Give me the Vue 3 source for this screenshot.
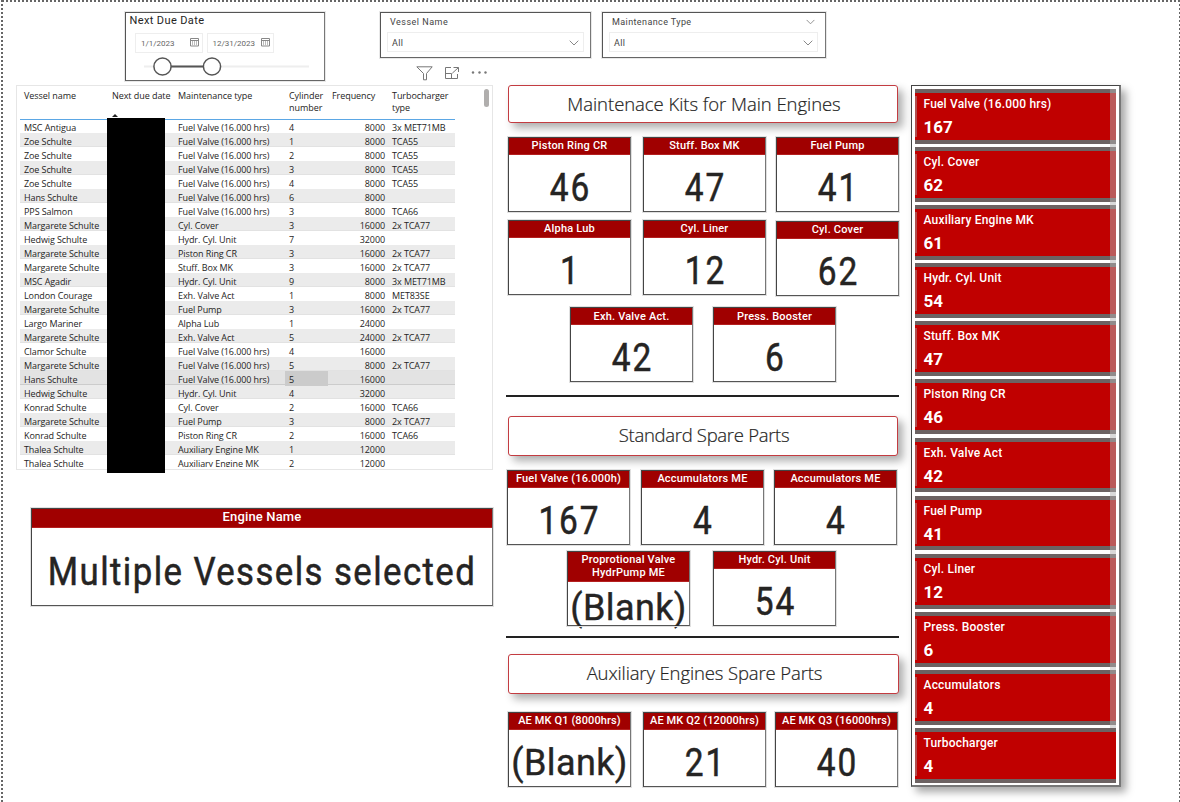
<script setup>
const columns = ['Vessel name', 'Next due date', 'Maintenance type', 'Cylinder number', 'Frequency', 'Turbocharger type']

const FV = 'Fuel Valve (16.000 hrs)'
const rows = [
  ['MSC Antigua', FV, 4, 8000, '3x MET71MB'],
  ['Zoe Schulte', FV, 1, 8000, 'TCA55'],
  ['Zoe Schulte', FV, 2, 8000, 'TCA55'],
  ['Zoe Schulte', FV, 3, 8000, 'TCA55'],
  ['Zoe Schulte', FV, 4, 8000, 'TCA55'],
  ['Hans Schulte', FV, 6, 8000, ''],
  ['PPS Salmon', FV, 3, 8000, 'TCA66'],
  ['Margarete Schulte', 'Cyl. Cover', 3, 16000, '2x TCA77'],
  ['Hedwig Schulte', 'Hydr. Cyl. Unit', 7, 32000, ''],
  ['Margarete Schulte', 'Piston Ring CR', 3, 16000, '2x TCA77'],
  ['Margarete Schulte', 'Stuff. Box MK', 3, 16000, '2x TCA77'],
  ['MSC Agadir', 'Hydr. Cyl. Unit', 9, 8000, '3x MET71MB'],
  ['London Courage', 'Exh. Valve Act', 1, 8000, 'MET83SE'],
  ['Margarete Schulte', 'Fuel Pump', 3, 16000, '2x TCA77'],
  ['Largo Mariner', 'Alpha Lub', 1, 24000, ''],
  ['Margarete Schulte', 'Exh. Valve Act', 5, 24000, '2x TCA77'],
  ['Clamor Schulte', FV, 4, 16000, ''],
  ['Margarete Schulte', FV, 5, 8000, '2x TCA77'],
  ['Hans Schulte', FV, 5, 16000, ''],
  ['Hedwig Schulte', 'Hydr. Cyl. Unit', 4, 32000, ''],
  ['Konrad Schulte', 'Cyl. Cover', 2, 16000, 'TCA66'],
  ['Margarete Schulte', 'Fuel Pump', 3, 8000, '2x TCA77'],
  ['Konrad Schulte', 'Piston Ring CR', 2, 16000, 'TCA66'],
  ['Thalea Schulte', 'Auxiliary Engine MK', 1, 12000, ''],
  ['Thalea Schulte', 'Auxiliary Engine MK', 2, 12000, '']
]
const selectedRow = 18

const sections = [
  {
    id: 'main', title: 'Maintenace Kits for Main Engines',
    groups: [
      { id: 'g1', cards: [['Piston Ring CR', '46'], ['Stuff. Box MK', '47'], ['Fuel Pump', '41']] },
      { id: 'g2', cards: [['Alpha Lub', '1'], ['Cyl. Liner', '12'], ['Cyl. Cover', '62']] },
      { id: 'g3', cards: [['Exh. Valve Act.', '42'], ['Press. Booster', '6']] }
    ]
  },
  {
    id: 'standard', title: 'Standard Spare Parts',
    groups: [
      { id: 'g4', cards: [['Fuel Valve (16.000h)', '167'], ['Accumulators ME', '4'], ['Accumulators ME', '4']] },
      { id: 'g5', cards: [['Proprotional Valve HydrPump ME', '(Blank)'], ['Hydr. Cyl. Unit', '54']] }
    ]
  },
  {
    id: 'aux', title: 'Auxiliary Engines Spare Parts',
    groups: [
      { id: 'g6', cards: [['AE MK Q1 (8000hrs)', '(Blank)'], ['AE MK Q2 (12000hrs)', '21'], ['AE MK Q3 (16000hrs)', '40']] }
    ]
  }
]

const totals = [
  ['Fuel Valve (16.000 hrs)', 167], ['Cyl. Cover', 62], ['Auxiliary Engine MK', 61], ['Hydr. Cyl. Unit', 54],
  ['Stuff. Box MK', 47], ['Piston Ring CR', 46], ['Exh. Valve Act', 42], ['Fuel Pump', 41],
  ['Cyl. Liner', 12], ['Press. Booster', 6], ['Accumulators', 4], ['Turbocharger', 4]
]
</script>

<template>
  <div class="page">
    <header class="filters">
      <section class="slicer date-slicer">
        <h2>Next Due Date</h2>
        <div class="dates">
          <div v-for="d in ['1/1/2023', '12/31/2023']" :key="d" class="date">
            <span>{{ d }}</span>
            <svg width="9" height="9" viewBox="0 0 9 9" fill="none" stroke="#888" stroke-width="1">
              <path d="M.5 .5h8v7.500h-8zM.5 2.500h8" />
              <path d="M2.500 3v4.500M4.500 3v4.500M6.500 3v4.500" stroke="#bbb" />
            </svg>
          </div>
        </div>
        <svg class="range" width="166" height="20" viewBox="0 0 166 20" fill="#fff">
          <path d="M0 9.500h165" stroke="#eee" stroke-width="2" />
          <path d="M20 9.500h50" stroke="#555" stroke-width="2" />
          <circle cx="18.500" cy="9.500" r="8.600" stroke="#555" stroke-width="1.500" />
          <circle cx="68" cy="9.500" r="8.600" stroke="#555" stroke-width="1.500" />
        </svg>
      </section>

      <div class="vessel-filter">
        <section class="slicer drop">
          <h3>Vessel Name</h3>
          <div class="select">
            <span>All</span>
            <svg width="10" height="6" viewBox="0 0 10 6" fill="none" stroke="#888"><path d="M.7.7 5 5 9.300.7" /></svg>
          </div>
        </section>
        <div class="tools">
          <svg width="17" height="15" viewBox="0 0 17 15" fill="none" stroke="#777"><path d="M.8.800h15.400L10.500 7.500v6.300h-3V7.500z" /></svg>
          <svg width="16" height="14" viewBox="0 0 16 14" fill="none" stroke="#777"><path d="M7 1.500H1.500v11h12V8M1.500 7.500h6v5M9.500 1.500h5V6M14.300 1.700 8.300 7.200" /></svg>
          <svg width="17" height="14" viewBox="0 0 17 14" fill="#777"><circle cx="2" cy="6.500" r="1.200" /><circle cx="8.500" cy="6.500" r="1.200" /><circle cx="14.500" cy="6.500" r="1.200" /></svg>
        </div>
      </div>

      <section class="slicer drop type">
        <h3>Maintenance Type <svg width="9" height="6" viewBox="0 0 10 6" fill="none" stroke="#888"><path d="M.7.7 5 5 9.300.7" /></svg></h3>
        <div class="select">
          <span>All</span>
          <svg width="10" height="6" viewBox="0 0 10 6" fill="none" stroke="#888"><path d="M.7.7 5 5 9.300.7" /></svg>
        </div>
      </section>
    </header>

    <main class="board">
      <div class="left">
        <section class="table">
          <div class="row head">
            <div v-for="c in columns" :key="c" class="cell">{{ c }}</div>
          </div>
          <div class="rows">
            <div v-for="(r, i) in rows" :key="i" class="row" :class="{ band: i % 2 === 1 || i === selectedRow, selected: i === selectedRow }">
              <div class="cell">{{ r[0] }}</div>
              <div class="cell"></div>
              <div class="cell">{{ r[1] }}</div>
              <div class="cell num">{{ r[2] }}</div>
              <div class="cell freq">{{ r[3] }}</div>
              <div class="cell turbo">{{ r[4] }}</div>
            </div>
          </div>
          <i class="sort"></i>
          <i class="scroll"></i>
          <i class="redaction"></i>
        </section>
        <section class="card engine">
          <h4>Engine Name</h4>
          <p>Multiple Vessels selected</p>
        </section>
      </div>

      <div class="middle">
        <section v-for="s in sections" :key="s.id" class="section" :class="s.id">
          <h1>{{ s.title }}</h1>
          <div v-for="g in s.groups" :key="g.id" class="group" :class="g.id">
            <article v-for="(c, i) in g.cards" :key="i" class="card">
              <h4>{{ c[0] }}</h4>
              <p :class="c[1] === '(Blank)' ? 'blank' : 'value'">{{ c[1] }}</p>
            </article>
          </div>
        </section>
      </div>

      <aside class="totals">
        <div v-for="t in totals" :key="t[0]" class="total">
          <span>{{ t[0] }}</span>
          <b>{{ t[1] }}</b>
        </div>
      </aside>
    </main>
  </div>
</template>

<style>
body { margin: 0; background: #fff; overflow: hidden; }
</style>

<style scoped>
* { box-sizing: border-box; }
h1, h2, h3, h4, p { margin: 0; font-weight: 400; }
svg { display: block; flex: none; }
.page {
  position: relative; width: 1180px; height: 802px; overflow: hidden; color: #252423;
  font-family: Roboto, "Liberation Sans", sans-serif; white-space: nowrap;
  background:
    repeating-linear-gradient(90deg, #666 0 2px, #fff 2px 4px) 2px 0 / 100% 2px no-repeat,
    repeating-linear-gradient(180deg, #666 0 2px, #fff 2px 4px) 1px 0 / 2px 100% no-repeat,
    repeating-linear-gradient(180deg, #666 0 2px, #fff 2px 4px) 1179px 0 / 1px 100% no-repeat #fff;
}
.filters { display: flex; align-items: flex-start; height: 85px; padding: 12px 0 0 125px; }
.slicer { border: 1px solid #555; border-right-color: #777; border-bottom-color: #666; outline: 1px solid #e8e8e8; }
.date-slicer { width: 200px; height: 69px; margin-right: 55px; }
.date-slicer h2 { font-size: 11px; line-height: 14px; padding: 1px 0 0 3.500px; letter-spacing: .38px; }
.dates { display: flex; gap: 4px; margin: 5px 0 0 9px; }
.date { display: flex; align-items: center; justify-content: space-between; width: 67.500px; height: 20px; border: 1px solid #eee; padding: 0 3px 0 5px; font-size: 8px; color: #666; }
.date svg { margin-bottom: 2px; }
.range { margin: 4px 0 0 18px; }
.vessel-filter { width: 211px; margin-right: 11px; }
.drop { height: 46px; padding: 0 6px; }
.drop h3 { display: flex; justify-content: space-between; align-items: center; height: 17px; padding: 0 3px; font-size: 9px; letter-spacing: .5px; color: #444; }
.type h3 { letter-spacing: .4px; }
.select { display: flex; align-items: center; justify-content: space-between; height: 20px; margin-top: 2px; padding: 1px 4px 0; border: 1px solid #eee; font-size: 9px; letter-spacing: .3px; color: #444; }
.type { width: 224px; padding: 0 7px 0 6px; }
.tools { display: flex; gap: 11px; margin: 8px 0 0 35.500px; }

.board { display: grid; grid-template-columns: 477px 393px 210px; margin-left: 16px; align-items: start; }
.middle { margin-left: 13px; width: 393px; }
.table { position: relative; height: 385px; border: 1px solid #e6e6e6; padding: 0 0 0 3px; font: 9px/12px "Open Sans", "Noto Sans", sans-serif; }
.row { display: grid; grid-template-columns: 88px 66px 111px 43px 60px 67px; width: 435px; height: 14px; }
.cell { padding: 2.500px 4px 0; line-height: 12px; letter-spacing: -.1px; }
.head { height: 33px; }
.head .cell { white-space: normal; padding: 4px 0 0 4px; letter-spacing: -.06px; }
.head .cell:nth-child(2) { white-space: nowrap; }
.rows { height: 348px; overflow: hidden; position: relative; }
.rows::before { content: ""; position: absolute; left: 0; top: 0; width: 435px; height: 1px; background: #5ba7e5; }
.band { background: #ebebeb; border-bottom: 1px solid #e2e2e2; }
.selected { background: #e3e3e3; border-bottom-color: #ccc; }
.selected .num { background: #cbcbcb; }
.freq { text-align: right; padding-right: 3px; }
.sort { position: absolute; left: 95px; top: 28px; border: 3px solid transparent; border-top: 0; border-bottom-color: #222; }
.scroll { position: absolute; left: 467px; top: 3px; width: 5px; height: 18px; border-radius: 3px; background: #b0aead; }
.redaction { position: absolute; left: 90px; top: 32px; width: 58px; height: 355px; background: #000; }

.card { display: flex; flex-direction: column; width: 123px; height: 75px; border: 1px solid #444; border-right-color: #777; border-bottom-color: #555; outline: 1px solid #e0e0e0; text-align: center; }
.card h4 { background: #a00000; color: #fff; font-size: 11px; font-weight: 500; line-height: 13px; padding: 1px 4px 2px; letter-spacing: .2px; white-space: normal; border-bottom: 1px solid #b52020; }
.card p { flex: 1; display: flex; align-items: center; justify-content: center; font-size: 38px; line-height: 40px; padding-top: 10px; min-height: 0; }
.card .value { letter-spacing: 2px; transform: scaleX(.88); padding-left: 2px; -webkit-text-stroke: .5px #252423; }
.card .blank { font-size: 36px; letter-spacing: .4px; -webkit-text-stroke: .4px #252423; }
.engine { width: 462px; height: 98px; margin: 38px 0 0 15px; }
.engine h4 { font-size: 13px; line-height: 15px; padding: 0 0 3px; letter-spacing: .15px; }
.engine p { letter-spacing: 1.550px; padding-top: 10px; transform: scaleX(.915); -webkit-text-stroke: .5px #252423; }

.section h1 { width: 390px; height: 38px; margin-left: 2px; border: 1px solid #c33c41; border-radius: 3px; background: #fff; box-shadow: 5px 5px 8px rgba(0, 0, 0, .32); font: 300 18.500px/36px "Open Sans", "Noto Sans", sans-serif; text-align: center; padding-left: 2px; -webkit-text-stroke: .2px #252423; }
.group { display: flex; }
.g1 { margin: 14px 0 0 2px; gap: 12px; }
.g1 .card:last-child, .g2 .card:last-child { margin-left: -2px; }
.g2 { margin: 8px 0 0 2px; gap: 12px; }
.g2 .card:last-child { margin-top: 1px; }
.g3 { margin: 11px 0 0 64px; gap: 20px; }
.g3 h4 { padding-top: 2px; padding-bottom: 1px; }
.g4 { margin: 14px 0 0 1px; gap: 11px; }
.g4 .card:last-child { margin-left: -1px; }
.g5 { margin: 6px 0 0 61px; gap: 23px; }
.g5 .blank { padding-top: 9px; }
.g6 { margin: 18px 0 0 2px; gap: 12px; }
.g6 .card:last-child { margin-left: -3px; }
.g6 h4 { padding-left: 0; padding-right: 0; letter-spacing: .12px; }
.main h1 { letter-spacing: -.05px; }
.standard { border-top: 2px solid #222; margin-top: 13px; padding-top: 19px; }
.standard h1 { height: 40px; line-height: 36px; letter-spacing: -.3px; }
.aux { border-top: 2px solid #222; margin-top: 10px; padding-top: 16px; }
.aux h1 { height: 40px; width: 391px; letter-spacing: -.12px; }

.totals { margin-left: 25px; width: 210px; height: 702px; border: 1px solid #444; border-right: 2px solid #777; border-bottom: 2px solid #777; padding: 3px; box-shadow: 5px 5px 8px rgba(0, 0, 0, .35); position: relative; display: flex; flex-direction: column; gap: 3.300px; }
.totals::after { content: ""; position: absolute; left: 198px; top: 3px; width: 6px; height: 639px; background: rgba(180, 180, 180, .5); }
.total { position: relative; flex: none; display: flex; flex-direction: column; width: 201px; height: 54.800px; background: #c00000; border-top: 4px solid #6c6262; border-bottom: 4px solid #6c6262; padding: 4px 0 0 8.500px; color: #fff; }
.total::before { content: ""; position: absolute; left: 0; top: 3px; width: 2px; height: 41px; background: #b05050; }
.total span { font-size: 12px; font-weight: 500; line-height: 15px; letter-spacing: .18px; }
.total b { font-size: 17px; line-height: 20px; margin-top: 5px; }
</style>
